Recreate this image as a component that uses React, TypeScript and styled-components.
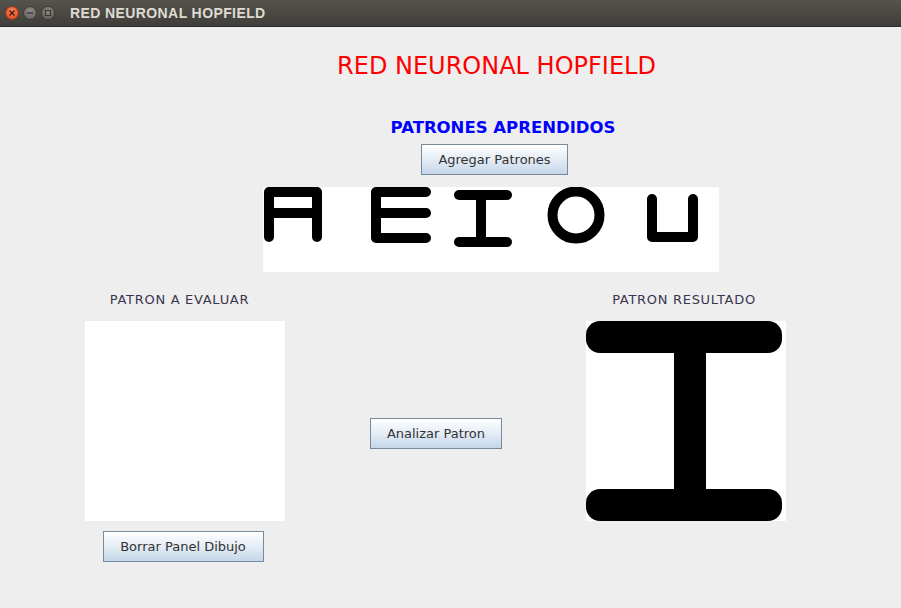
import React from "react";
import styled, { createGlobalStyle } from "styled-components";

const Global = createGlobalStyle`
  html, body { margin: 0; padding: 0; background: #eeeeee; }
  body { width: 901px; height: 608px; overflow: hidden; font-family: "DejaVu Sans", sans-serif; }
`;

const Window = styled.div`
  width: 901px;
  height: 608px;
  display: flex;
  flex-direction: column;
  background: #eeeeee;
`;

const TitleBar = styled.div`
  height: 27px;
  flex: none;
  display: flex;
  align-items: center;
  padding-left: 5px;
  background: linear-gradient(#55534d, #3f3e3a);
  border-bottom: 1px solid #2e2d2a;
  box-sizing: border-box;
`;

const Controls = styled.div`
  display: flex;
  gap: 4px;
  margin-right: 15px;
`;

const WinBtn = styled.div<{ $close?: boolean }>`
  width: 14px;
  height: 14px;
  border-radius: 50%;
  display: flex;
  align-items: center;
  justify-content: center;
  background: ${(p) =>
    p.$close
      ? "radial-gradient(circle at 50% 35%, #f7895a, #e4562a 70%, #c2421d)"
      : "radial-gradient(circle at 50% 35%, #8f8d86, #6c6a64 70%, #55534e)"};
  border: 1px solid ${(p) => (p.$close ? "#9c3415" : "#3c3b37")};
  box-sizing: border-box;
`;

const TitleText = styled.div`
  font-family: "Liberation Sans", sans-serif;
  font-weight: bold;
  font-size: 14px;
  color: #dfdbd2;
  letter-spacing: 0.4px;
`;

const Body = styled.div`
  flex: 1;
  display: flex;
  flex-direction: column;
`;

const Top = styled.div`
  display: flex;
  flex-direction: column;
  align-items: center;
  padding-left: 90px;
`;

const MainTitle = styled.div`
  margin-top: 25px;
  margin-left: 2px;
  color: #ff0000;
  font-size: 24px;
  line-height: 28px;
  height: 28px;
`;

const SubTitle = styled.div`
  margin-top: 38px;
  margin-left: 15px;
  color: #0000ff;
  font-size: 16.5px;
  font-weight: bold;
  line-height: 20px;
`;

const Button = styled.button<{ $w: number }>`
  width: ${(p) => p.$w}px;
  height: 31px;
  box-sizing: border-box;
  border: 1px solid #7a8a9a;
  border-radius: 0;
  background: linear-gradient(#ffffff 0%, #e7eef6 45%, #c5d7ea 100%);
  font-family: "DejaVu Sans", sans-serif;
  font-size: 13px;
  color: #333333;
  padding: 0;
  display: flex;
  align-items: center;
  justify-content: center;
`;

const AddBtnWrap = styled.div`
  margin-top: 6px;
  margin-left: -2px;
`;

const Patterns = styled.div`
  margin-top: 12px;
  margin-left: -10px;
  width: 456px;
  height: 85px;
  background: #ffffff;
`;

const Bottom = styled.div`
  margin-top: 17px;
  display: grid;
  grid-template-columns: 85px 200px 85px 131px 85px 200px;
`;

const Column = styled.div<{ $col: number }>`
  grid-column: ${(p) => p.$col};
  display: flex;
  flex-direction: column;
  align-items: center;
`;

const Label = styled.div<{ $shift: number }>`
  height: 22px;
  line-height: 22px;
  font-size: 13px;
  letter-spacing: 0.7px;
  color: #3a3550;
  margin-left: ${(p) => p.$shift}px;
  white-space: nowrap;
`;

const Canvas = styled.div`
  width: 200px;
  height: 200px;
  background: #ffffff;
  margin-top: 10px;
`;

const MiddleCol = styled.div`
  grid-column: 4;
  padding-top: 129px;
`;

const BorrarWrap = styled.div`
  margin-top: 10px;
  margin-left: -4px;
`;

function PatternsSvg() {
  return (
    <svg width="456" height="85" viewBox="0 0 456 85">
      <g stroke="#000" strokeWidth="10" strokeLinecap="round" strokeLinejoin="round" fill="none">
        {/* A */}
        <path d="M6 50 V5 H54 V50 M6 26 H54" />
        {/* E */}
        <path d="M163 5 H113 V51 H163 M113 26 H163" />
        {/* I */}
        <path d="M196 8 H244 M196 55 H244 M218 8 V55" />
        {/* O */}
        <circle cx="313" cy="28" r="23.5" />
        {/* U */}
        <path d="M389 12 V50 H430 V12" />
      </g>
    </svg>
  );
}

function ResultSvg() {
  return (
    <svg width="200" height="200" viewBox="0 0 200 200">
      <g fill="#000">
        <rect x="0" y="0" width="196" height="32" rx="14" />
        <rect x="88" y="20" width="32" height="160" />
        <rect x="0" y="168" width="196" height="32" rx="14" />
      </g>
    </svg>
  );
}

export default function App() {
  return (
    <>
      <Global />
      <Window>
        <TitleBar>
          <Controls>
            <WinBtn $close>
              <svg width="8" height="8" viewBox="0 0 8 8">
                <path d="M1.5 1.5 L6.5 6.5 M6.5 1.5 L1.5 6.5" stroke="#4a1a0a" strokeWidth="1.4" />
              </svg>
            </WinBtn>
            <WinBtn>
              <svg width="8" height="8" viewBox="0 0 8 8">
                <path d="M1 4 H7" stroke="#3a3935" strokeWidth="1.4" />
              </svg>
            </WinBtn>
            <WinBtn>
              <svg width="8" height="8" viewBox="0 0 8 8">
                <rect x="1.5" y="1.5" width="5" height="5" stroke="#3a3935" strokeWidth="1.2" fill="none" />
              </svg>
            </WinBtn>
          </Controls>
          <TitleText>RED NEURONAL HOPFIELD</TitleText>
        </TitleBar>
        <Body>
          <Top>
            <MainTitle>RED NEURONAL HOPFIELD</MainTitle>
            <SubTitle>PATRONES APRENDIDOS</SubTitle>
            <AddBtnWrap>
              <Button $w={147}>Agregar Patrones</Button>
            </AddBtnWrap>
            <Patterns>
              <PatternsSvg />
            </Patterns>
          </Top>
          <Bottom>
            <Column $col={2}>
              <Label $shift={-11}>PATRON A EVALUAR</Label>
              <Canvas />
              <BorrarWrap>
                <Button $w={161}>Borrar Panel Dibujo</Button>
              </BorrarWrap>
            </Column>
            <MiddleCol>
              <Button $w={132}>Analizar Patron</Button>
            </MiddleCol>
            <Column $col={6}>
              <Label $shift={-4}>PATRON RESULTADO</Label>
              <Canvas>
                <ResultSvg />
              </Canvas>
            </Column>
          </Bottom>
        </Body>
      </Window>
    </>
  );
}
